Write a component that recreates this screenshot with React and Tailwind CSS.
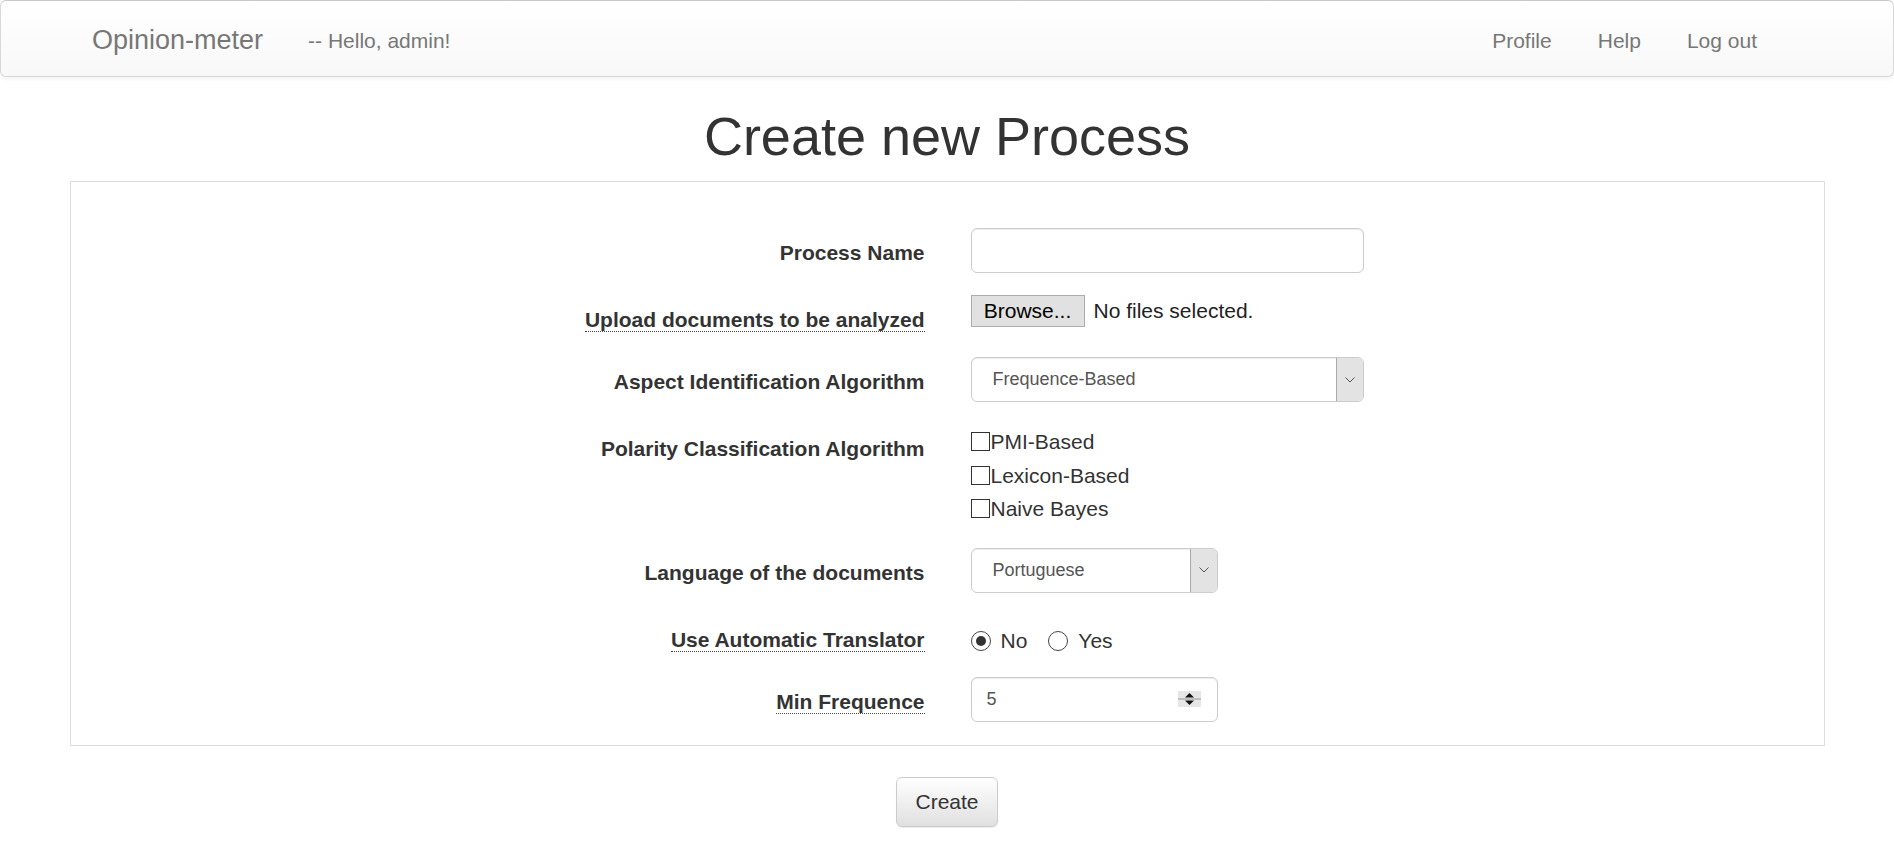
import { useState } from 'react';

const labelCls = 'w-[854px] shrink-0 pt-[10px] text-right text-[21px] font-bold leading-[30px] text-[#333]';
const boxCls = 'rounded-[6px] border border-[#ccc] bg-white shadow-[inset_0_1px_1px_rgba(0,0,0,0.075)]';

function Abbr({ children }) {
  return <span className="border-b border-dotted border-[#444]">{children}</span>;
}

function SelectBox({ value, width }) {
  return (
    <div className={`${boxCls} ${width} flex h-[45px] items-stretch overflow-hidden`}>
      <div className="flex flex-1 items-center pl-[21px] text-[18px] text-[#555]">{value}</div>
      <div className="flex w-[27px] items-center justify-center border-l border-[#aaa] bg-[#e3e3e3]">
        <svg width="10" height="6" viewBox="0 0 10 6" fill="none">
          <path d="M0.5 0.5 L5 5 L9.5 0.5" stroke="#555" strokeWidth="1" />
        </svg>
      </div>
    </div>
  );
}

function Check({ label }) {
  const [on, setOn] = useState(false);
  return (
    <button type="button" onClick={() => setOn(!on)} className="flex h-[33.5px] items-center text-[21px] text-[#333]">
      <span className="mr-px flex h-[19px] w-[19px] items-center justify-center border border-[#333] bg-white">
        {on && <span className="h-[9px] w-[9px] bg-[#333]" />}
      </span>
      {label}
    </button>
  );
}

function Radio({ label, checked, onClick }) {
  return (
    <button type="button" onClick={onClick} className="flex items-center text-[21px] text-[#333]">
      <span className="mr-[10px] flex h-[20px] w-[20px] items-center justify-center rounded-full border border-[#444] bg-white">
        {checked && <span className="h-[10px] w-[10px] rounded-full bg-[#333]" />}
      </span>
      {label}
    </button>
  );
}

export default function App() {
  const [translate, setTranslate] = useState('no');

  return (
    <div className="min-h-[842px] bg-white font-['Liberation_Sans',Arial,sans-serif]">
      <nav className="h-[77px] rounded-[6px] border border-[#d8d8d8] border-t-[#c8c8c8] bg-gradient-to-b from-white to-[#f8f8f8] shadow-[0_1px_5px_rgba(0,0,0,0.075)]">
        <div className="mx-auto flex h-full w-[1755px] items-center px-[22.5px] pt-[4px]">
          <span className="text-[27px] text-[#777]">Opinion-meter</span>
          <span className="ml-[45px] text-[21px] text-[#777]">-- Hello, admin!</span>
          <ul className="ml-auto mr-[45px] flex gap-[46px] text-[21px] text-[#777]">
            <li>Profile</li>
            <li>Help</li>
            <li>Log out</li>
          </ul>
        </div>
      </nav>

      <div className="mx-auto w-[1755px]">
        <h1 className="mb-[15px] mt-[30px] text-center text-[54px] font-normal leading-[59px] text-[#333]">Create new Process</h1>

        <div className="flex flex-col gap-[22px] border border-[#ddd] bg-white pb-[23px] pt-[46px]">
          <div className="flex items-start gap-[46px]">
            <label className={labelCls}>Process Name</label>
            <input type="text" className={`${boxCls} h-[45px] w-[393px] px-[18px] text-[18px] text-[#555] outline-none`} />
          </div>

          <div className="flex items-start gap-[46px]">
            <label className={labelCls}>
              <Abbr>Upload documents to be analyzed</Abbr>
            </label>
            <div className="flex items-center gap-[9px] text-[21px] text-[#222]">
              <span className="flex h-[32px] w-[114px] items-center justify-center border border-[#adadad] bg-[#e1e1e1] text-black">Browse...</span>
              <span>No files selected.</span>
            </div>
          </div>

          <div className="flex items-start gap-[46px]">
            <label className={labelCls}>Aspect Identification Algorithm</label>
            <SelectBox value="Frequence-Based" width="w-[393px]" />
          </div>

          <div className="flex items-start gap-[46px]">
            <label className={labelCls}>Polarity Classification Algorithm</label>
            <div className="flex flex-col pt-[1px]">
              <Check label="PMI-Based" />
              <Check label="Lexicon-Based" />
              <Check label="Naive Bayes" />
            </div>
          </div>

          <div className="flex items-start gap-[46px]">
            <label className={labelCls}>Language of the documents</label>
            <SelectBox value="Portuguese" width="w-[247px]" />
          </div>

          <div className="flex items-start gap-[46px]">
            <label className={labelCls}>
              <Abbr>Use Automatic Translator</Abbr>
            </label>
            <div className="flex h-[40px] items-center gap-[21px] pt-[12px]">
              <Radio label="No" checked={translate === 'no'} onClick={() => setTranslate('no')} />
              <Radio label="Yes" checked={translate === 'yes'} onClick={() => setTranslate('yes')} />
            </div>
          </div>

          <div className="flex items-start gap-[46px]">
            <label className={labelCls}>
              <Abbr>Min Frequence</Abbr>
            </label>
            <div className={`${boxCls} flex h-[45px] w-[247px] items-center justify-between pl-[15px] pr-[16px] text-[18px] text-[#555]`}>
              <span>5</span>
              <svg width="23" height="16" viewBox="0 0 23 16">
                <rect x="0" y="0" width="23" height="16" fill="#e6e6e6" />
                <line x1="0" y1="8" x2="23" y2="8" stroke="#999" strokeWidth="1" />
                <path d="M7 6.5 L11.5 2 L16 6.5 Z" fill="#111" />
                <path d="M7 9.5 L11.5 14 L16 9.5 Z" fill="#111" />
              </svg>
            </div>
          </div>
        </div>

        <div className="mt-[31px] flex justify-center">
          <button type="button" className="h-[50px] w-[102px] rounded-[6px] border border-[#ccc] bg-gradient-to-b from-white to-[#e0e0e0] text-[21px] text-[#333] shadow-[0_1px_1px_rgba(0,0,0,0.075)]">
            Create
          </button>
        </div>
      </div>
    </div>
  );
}
